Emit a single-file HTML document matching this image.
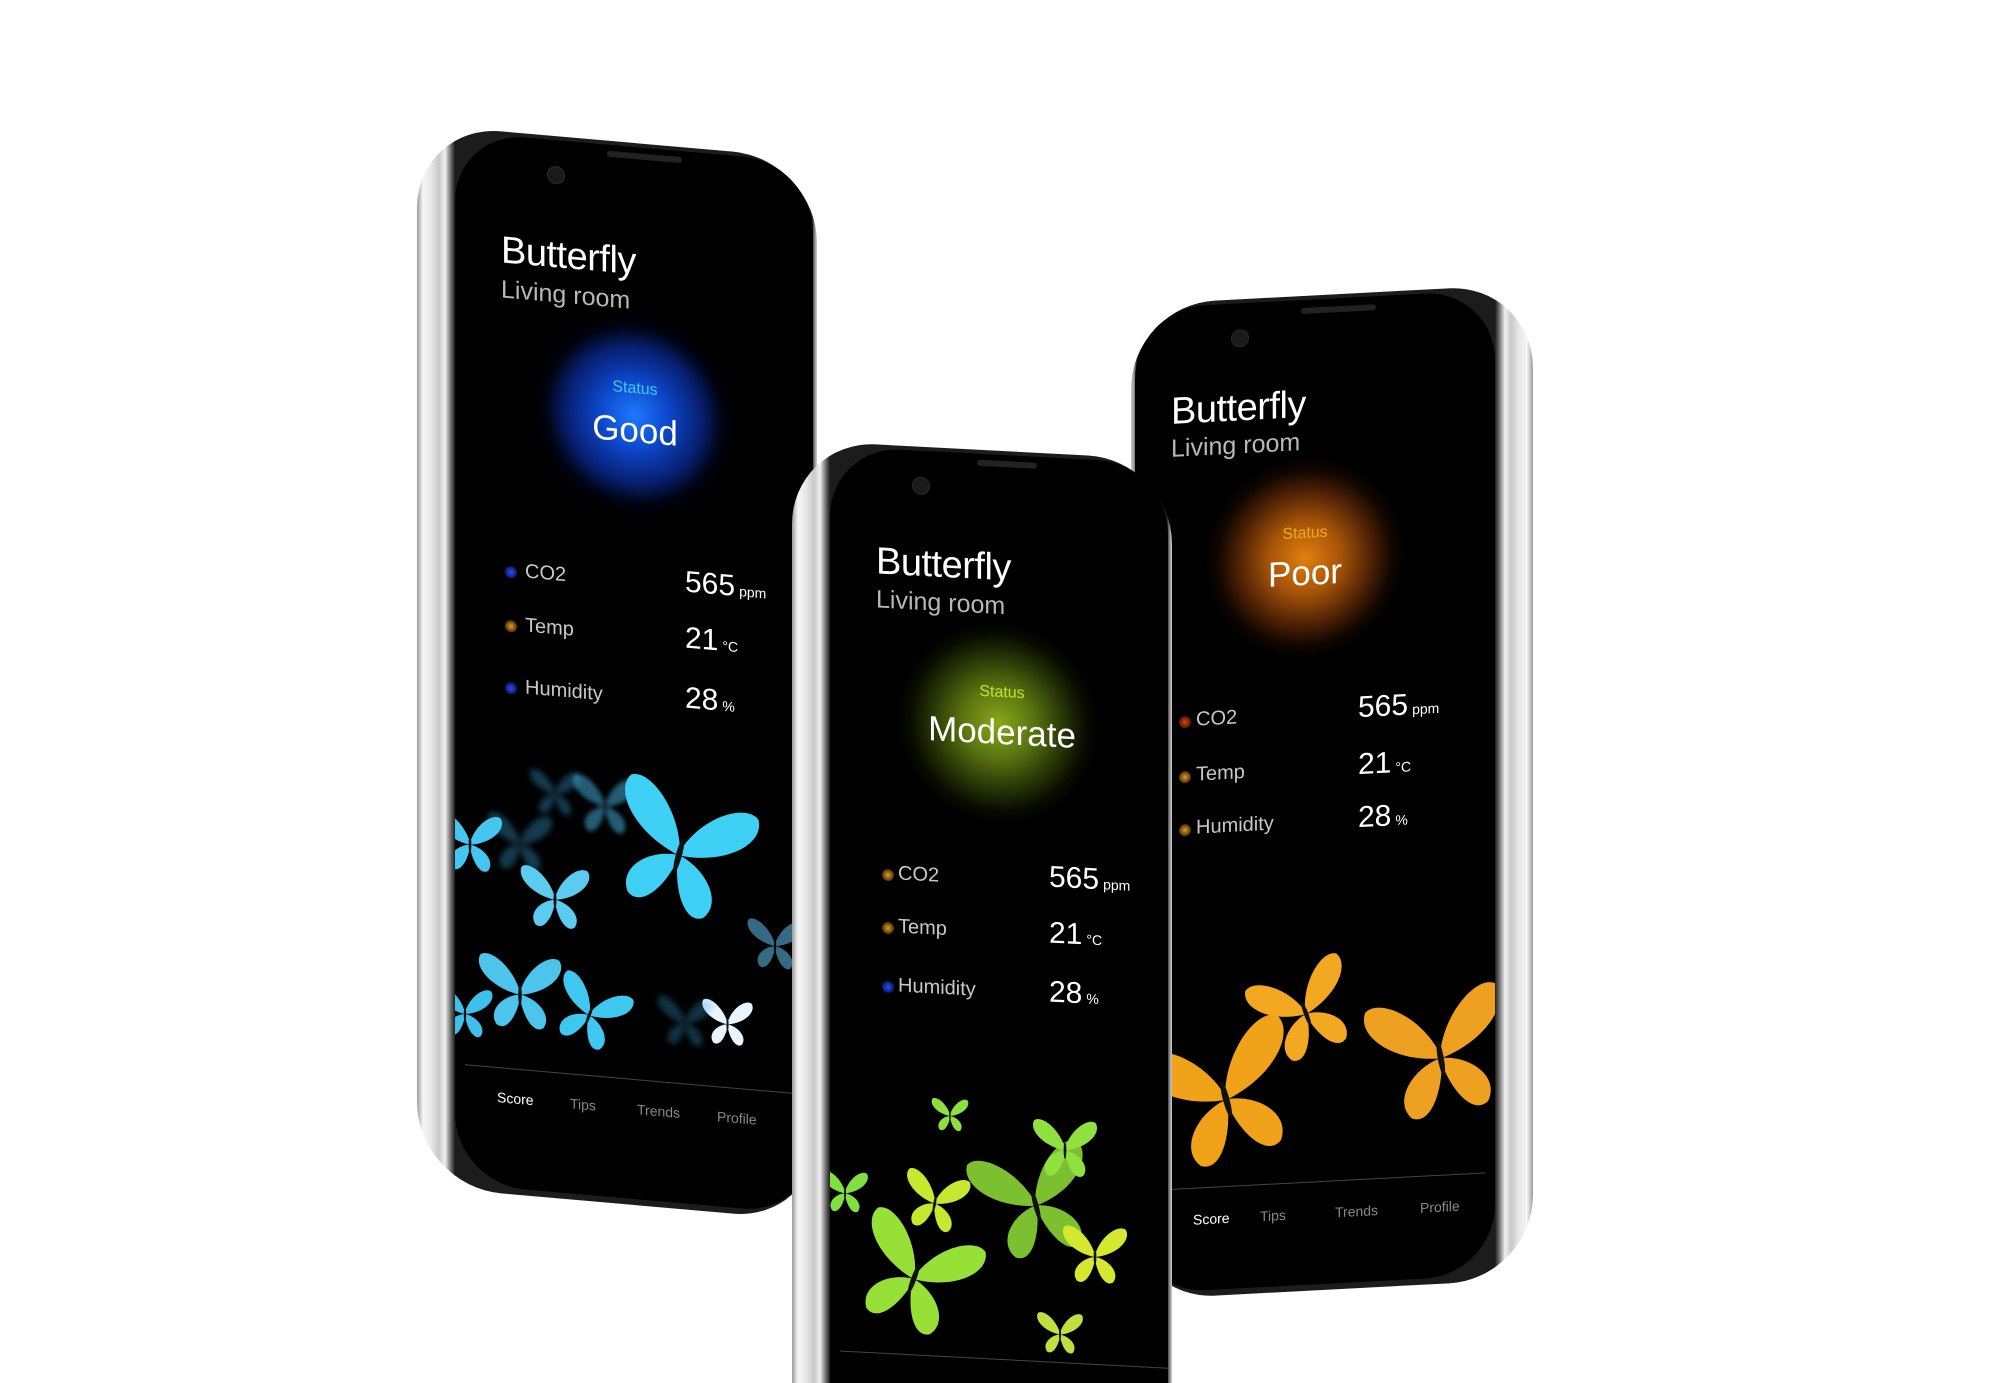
<!DOCTYPE html>
<html><head><meta charset="utf-8"><style>
html,body{margin:0;padding:0;background:#fff;width:2000px;height:1383px;overflow:hidden;font-family:"Liberation Sans",sans-serif;}
#wrap{position:relative;width:2000px;height:1383px;overflow:hidden;}
.phone{position:absolute;transform-origin:0 0;}
.frame{position:absolute;inset:0;border-radius:84px;}
.screen{position:absolute;background:#000;border-radius:70px;overflow:hidden;}
.t{position:absolute;white-space:nowrap;color:#fff;line-height:1;}
.title{font-size:38px;letter-spacing:-0.5px;}
.sub{font-size:25px;color:#b8b8b8;}
.status{font-size:16px;transform:translateX(-50%);}
.big{font-size:35px;transform:translateX(-50%);}
.lab{font-size:20px;color:#c8c8c8;}
.val{font-size:30px;}
.val small{font-size:14px;margin-left:4px;}
.dot{position:absolute;width:12px;height:12px;border-radius:50%;}
.glow{position:absolute;border-radius:50%;transform:translate(-50%,-50%);}
.nav{position:absolute;font-size:14px;color:#888;}
.line{position:absolute;height:1px;background:#444;}
.cam{position:absolute;width:16px;height:16px;border-radius:50%;background:#1a1a1a;border:1px solid #2a2a2a;}
.spk{position:absolute;height:6px;background:#222;border-radius:3px;}
svg.b{position:absolute;overflow:visible;}
</style></head><body><div id="wrap">
<svg width="0" height="0" style="position:absolute">
<defs>
<symbol id="bf" viewBox="0 0 100 100">
<path d="M50 50 C42 22 16 4 6 12 C-2 26 18 48 49 53 Z"/>
<path d="M49 53 C30 56 14 74 24 88 C35 96 47 76 50 56 Z"/>
<path d="M50 50 C58 22 84 4 94 12 C102 26 82 48 51 53 Z"/>
<path d="M51 53 C70 56 86 74 76 88 C65 96 53 76 50 56 Z"/>
<ellipse cx="50" cy="53" rx="2" ry="12" fill="#111"/>
</symbol>
</defs>
</svg>

<!-- Phone 1 -->
<div class="phone" style="left:417px;top:124px;width:400px;height:1062px;transform:skewY(5deg);">
 <div class="frame" style="background:linear-gradient(90deg,#9a9a9a 0,#f6f6f6 6px,#e8e8e8 14px,#c8c8c8 22px,#f0f0f0 28px,#6a6a6a 34px,#1c1c1c 38px,#1c1c1c 395px,#999 398px,#ccc 400px);"></div>
 <div class="screen" style="left:38px;right:4px;top:4px;bottom:6px;">
  <div class="glow" style="left:179px;top:268px;width:200px;height:200px;background:radial-gradient(circle,#1f78ff 0,#0c46c8 25%,#071f70 48%,rgba(0,10,50,0.4) 62%,rgba(0,0,0,0) 72%);"></div>
  <div style="position:absolute;left:0;right:0;top:600px;height:335px;">
   <svg class="b" style="left:30px;top:70px;width:70px;height:70px;opacity:.35;filter:blur(3px)" fill="#3aa8e0"><use href="#bf"/></svg>
   <svg class="b" style="left:70px;top:25px;width:60px;height:55px;opacity:.35;filter:blur(3px)" fill="#3aa8e0"><use href="#bf"/></svg>
   <svg class="b" style="left:110px;top:25px;width:80px;height:70px;opacity:.5;filter:blur(2px)" fill="#4ab8e8"><use href="#bf"/></svg>
   <svg class="b" style="left:-20px;top:70px;width:70px;height:80px" fill="#45c6f0"><use href="#bf"/></svg>
   <svg class="b" style="left:60px;top:120px;width:80px;height:75px" fill="#5ccbf0"><use href="#bf"/></svg>
   <svg class="b" style="left:150px;top:-15px;width:150px;height:230px;transform:rotate(15deg)" fill="#3fd0f5"><use href="#bf"/></svg>
   <svg class="b" style="left:20px;top:210px;width:90px;height:90px" fill="#4cc4ec"><use href="#bf"/></svg>
   <svg class="b" style="left:95px;top:195px;width:80px;height:150px;transform:rotate(20deg)" fill="#3ec8ef"><use href="#bf"/></svg>
   <svg class="b" style="left:-20px;top:240px;width:60px;height:80px" fill="#3ec0ea"><use href="#bf"/></svg>
   <svg class="b" style="left:245px;top:240px;width:55px;height:55px" fill="#e8f4ff"><use href="#bf"/></svg>
   <svg class="b" style="left:290px;top:150px;width:60px;height:70px;opacity:.6" fill="#5ab0dd"><use href="#bf"/></svg>
   <svg class="b" style="left:200px;top:240px;width:60px;height:60px;opacity:.3;filter:blur(3px)" fill="#3aa8e0"><use href="#bf"/></svg>
  </div>
  <div class="line" style="left:10px;right:0;top:932px;"></div>
 </div>
 <div class="cam" style="left:130px;top:30px"></div>
 <div class="spk" style="left:190px;top:10px;width:75px"></div>
 <div class="t title" style="left:84px;top:100px">Butterfly</div>
 <div class="t sub" style="left:84px;top:146px">Living room</div>
 <div class="t status" style="left:218px;top:238px;color:#3ccaff">Status</div>
 <div class="t big" style="left:218px;top:270px">Good</div>
 <div class="dot" style="left:88px;top:434px;background:radial-gradient(circle,#2a4cff,#0a1a60 70%,transparent)"></div>
 <div class="dot" style="left:88px;top:488px;background:radial-gradient(circle,#e0a020,#503008 70%,transparent)"></div>
 <div class="dot" style="left:88px;top:550px;background:radial-gradient(circle,#2a4cff,#0a1a60 70%,transparent)"></div>
 <div class="t lab" style="left:108px;top:428px">CO2</div>
 <div class="t lab" style="left:108px;top:482px">Temp</div>
 <div class="t lab" style="left:108px;top:544px">Humidity</div>
 <div class="t val" style="left:268px;top:420px">565<small>ppm</small></div>
 <div class="t val" style="left:268px;top:476px">21<small>°C</small></div>
 <div class="t val" style="left:268px;top:536px">28<small>%</small></div>
 <div class="nav" style="left:80px;top:958px;color:#fff">Score</div>
 <div class="nav" style="left:153px;top:958px">Tips</div>
 <div class="nav" style="left:220px;top:958px">Trends</div>
 <div class="nav" style="left:300px;top:958px">Profile</div>
</div>

<!-- Phone 3 -->
<div class="phone" style="left:1131px;top:305px;width:402px;height:995px;transform:skewY(-3deg);">
 <div class="frame" style="background:linear-gradient(270deg,#9a9a9a 0,#f6f6f6 6px,#e8e8e8 14px,#c8c8c8 22px,#f0f0f0 28px,#6a6a6a 34px,#1c1c1c 38px,#1c1c1c 396px,#999 399px,#ccc 402px);"></div>
 <div class="screen" style="left:4px;right:38px;top:4px;bottom:6px;">
  <div class="glow" style="left:170px;top:258px;width:200px;height:200px;background:radial-gradient(circle,#e08010 0,#a85408 25%,#4a2004 48%,rgba(40,15,0,0.4) 62%,rgba(0,0,0,0) 72%);"></div>
  <div style="position:absolute;left:0;right:0;top:636px;height:245px;overflow:hidden;">
   <svg class="b" style="left:10px;top:60px;width:160px;height:190px;transform:rotate(-15deg)" fill="#f0a218"><use href="#bf"/></svg>
   <svg class="b" style="left:115px;top:20px;width:110px;height:110px;transform:rotate(-20deg)" fill="#f2a820"><use href="#bf"/></svg>
   <svg class="b" style="left:230px;top:40px;width:150px;height:170px;transform:rotate(-10deg)" fill="#eea020"><use href="#bf"/></svg>
   <svg class="b" style="left:-30px;top:130px;width:60px;height:70px" fill="#b06010"><use href="#bf"/></svg>
  </div>
  <div class="line" style="left:0;right:10px;top:882px;"></div>
 </div>
 <div class="cam" style="left:100px;top:30px"></div>
 <div class="spk" style="left:170px;top:12px;width:75px"></div>
 <div class="t title" style="left:40px;top:90px">Butterfly</div>
 <div class="t sub" style="left:40px;top:134px">Living room</div>
 <div class="t status" style="left:174px;top:230px;color:#f0a820">Status</div>
 <div class="t big" style="left:174px;top:260px">Poor</div>
 <div class="dot" style="left:48px;top:414px;background:radial-gradient(circle,#e04010,#501808 70%,transparent)"></div>
 <div class="dot" style="left:48px;top:469px;background:radial-gradient(circle,#e0a020,#503008 70%,transparent)"></div>
 <div class="dot" style="left:48px;top:522px;background:radial-gradient(circle,#e0a020,#503008 70%,transparent)"></div>
 <div class="t lab" style="left:65px;top:408px">CO2</div>
 <div class="t lab" style="left:65px;top:463px">Temp</div>
 <div class="t lab" style="left:65px;top:516px">Humidity</div>
 <div class="t val" style="left:227px;top:400px">565<small>ppm</small></div>
 <div class="t val" style="left:227px;top:457px">21<small>°C</small></div>
 <div class="t val" style="left:227px;top:510px">28<small>%</small></div>
 <div class="nav" style="left:62px;top:910px;color:#fff">Score</div>
 <div class="nav" style="left:129px;top:910px">Tips</div>
 <div class="nav" style="left:204px;top:910px">Trends</div>
 <div class="nav" style="left:289px;top:910px">Profile</div>
</div>

<!-- Phone 2 -->
<div class="phone" style="left:792px;top:440px;width:380px;height:944px;transform:skewY(3deg);">
 <div class="frame" style="border-radius:84px 84px 0 0;background:linear-gradient(90deg,#9a9a9a 0,#f6f6f6 6px,#e8e8e8 14px,#c8c8c8 22px,#f0f0f0 28px,#6a6a6a 34px,#1c1c1c 38px,#1c1c1c 375px,#999 378px,#ccc 380px);"></div>
 <div class="screen" style="left:38px;right:4px;top:4px;bottom:0;border-radius:70px 70px 0 0;">
  <div class="glow" style="left:168px;top:268px;width:200px;height:200px;background:radial-gradient(circle,#88a818 0,#5a7410 25%,#253205 48%,rgba(20,30,0,0.4) 62%,rgba(0,0,0,0) 72%);"></div>
  <div style="position:absolute;left:0;right:0;top:630px;height:275px;overflow:hidden;">
   <svg class="b" style="left:100px;top:10px;width:40px;height:45px" fill="#8ee040"><use href="#bf"/></svg>
   <svg class="b" style="left:70px;top:80px;width:70px;height:80px;transform:rotate(10deg)" fill="#c8e830"><use href="#bf"/></svg>
   <svg class="b" style="left:140px;top:40px;width:130px;height:150px;transform:rotate(-15deg)" fill="#7cc030"><use href="#bf"/></svg>
   <svg class="b" style="left:200px;top:20px;width:70px;height:80px" fill="#90e040"><use href="#bf"/></svg>
   <svg class="b" style="left:20px;top:120px;width:130px;height:150px;transform:rotate(20deg)" fill="#96e038"><use href="#bf"/></svg>
   <svg class="b" style="left:-10px;top:90px;width:50px;height:50px" fill="#80e040"><use href="#bf"/></svg>
   <svg class="b" style="left:230px;top:120px;width:70px;height:90px" fill="#d4e830"><use href="#bf"/></svg>
   <svg class="b" style="left:200px;top:220px;width:60px;height:50px" fill="#c0e040"><use href="#bf"/></svg>
  </div>
  <div class="line" style="left:10px;right:0;top:904px;"></div>
 </div>
 <div class="cam" style="left:120px;top:30px"></div>
 <div class="spk" style="left:185px;top:10px;width:60px"></div>
 <div class="t title" style="left:84px;top:98px">Butterfly</div>
 <div class="t sub" style="left:84px;top:143px">Living room</div>
 <div class="t status" style="left:210px;top:234px;color:#c8e030">Status</div>
 <div class="t big" style="left:210px;top:264px">Moderate</div>
 <div class="dot" style="left:90px;top:424px;background:radial-gradient(circle,#e0a020,#503008 70%,transparent)"></div>
 <div class="dot" style="left:90px;top:477px;background:radial-gradient(circle,#e0a020,#503008 70%,transparent)"></div>
 <div class="dot" style="left:90px;top:536px;background:radial-gradient(circle,#2a4cff,#0a1a60 70%,transparent)"></div>
 <div class="t lab" style="left:106px;top:418px">CO2</div>
 <div class="t lab" style="left:106px;top:471px">Temp</div>
 <div class="t lab" style="left:106px;top:530px">Humidity</div>
 <div class="t val" style="left:257px;top:409px">565<small>ppm</small></div>
 <div class="t val" style="left:257px;top:465px">21<small>°C</small></div>
 <div class="t val" style="left:257px;top:524px">28<small>%</small></div>
</div>
</div></body></html>
